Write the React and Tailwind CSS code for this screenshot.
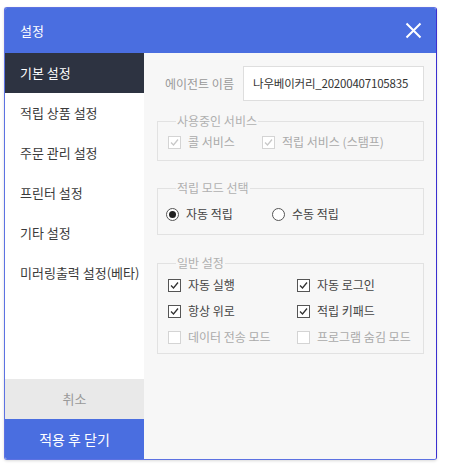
import React from 'react'

const font = { fontFamily: '"Noto Sans CJK KR", "Noto Sans", sans-serif' }

const menu = ['기본 설정', '적립 상품 설정', '주문 관리 설정', '프린터 설정', '기타 설정', '미러링출력 설정(베타)']

const Check = ({ checked, disabled, label }) => (
  <div className="flex items-center h-[16px]">
    <span
      className={
        'w-[13px] h-[13px] border flex items-center justify-center bg-white ' +
        (disabled ? 'border-[#d4d4d4]' : 'border-[#555]')
      }
    >
      {checked && (
        <svg width="11" height="11" viewBox="0 0 11 11">
          <path d="M2 5.5 L4.5 8 L9 2.5" fill="none" stroke={disabled ? '#c8c8c8' : '#333'} strokeWidth="1.3" />
        </svg>
      )}
    </span>
    <span className={'ml-[7px] text-[12px] ' + (disabled ? 'text-[#aaa]' : 'text-[#444]')}>{label}</span>
  </div>
)

const Radio = ({ checked, label }) => (
  <div className="flex items-center h-[16px]">
    <span className="w-[13px] h-[13px] rounded-full border border-[#555] bg-white flex items-center justify-center">
      {checked && <span className="w-[7px] h-[7px] rounded-full bg-[#222]" />}
    </span>
    <span className="ml-[7px] text-[12px] text-[#444]">{label}</span>
  </div>
)

const Group = ({ title, className, children }) => (
  <fieldset className={'border border-[#e2e2e2] px-[10px] ' + className}>
    <legend className="ml-[8px] px-[1px] text-[12px] leading-[14px] text-[#b0b0b0]">{title}</legend>
    {children}
  </fieldset>
)

export default function App() {
  return (
    <div className="w-[450px] h-[470px] bg-white pt-[7px] pl-[4px]" style={font}>
      <div className="w-[433px] h-[453px] flex flex-col rounded-[3px] overflow-hidden border border-[#5d72e2] border-r-[#3a2fd0] shadow-[0_1px_3px_rgba(0,0,0,0.15)]">
        <div className="h-[45px] shrink-0 bg-[#4a6ee0] flex items-center justify-between pl-[15px] pr-[14px]">
          <span className="text-white text-[13px]">설정</span>
          <svg width="17" height="17" viewBox="0 0 17 17">
            <path d="M1.5 1.5 L15.5 15.5 M15.5 1.5 L1.5 15.5" stroke="white" strokeWidth="2" />
          </svg>
        </div>
        <div className="flex flex-1 min-h-0">
          <div className="w-[139px] shrink-0 bg-white flex flex-col">
            {menu.map((m, i) => (
              <div
                key={m}
                className={
                  'h-[40px] flex items-center pl-[15px] text-[13px] ' +
                  (i === 0 ? 'bg-[#2d3341] text-white' : 'text-[#3a3a3a]')
                }
              >
                {m}
              </div>
            ))}
            <div className="flex-1" />
            <div className="h-[40px] bg-[#e9e9e9] text-[#999] text-[13px] flex items-center justify-center">취소</div>
            <div className="h-[40px] bg-[#4a6ee0] text-white text-[14px] flex items-center justify-center">적용 후 닫기</div>
          </div>
          <div className="flex-1 bg-[#f7f7f7] pt-[13px] pl-[13px] pr-[12px]">
            <div className="flex items-center">
              <span className="ml-[8px] w-[78px] text-[12px] text-[#999]">에이전트 이름</span>
              <div className="w-[181px] h-[35px] bg-white border border-[#dedede] flex items-center pl-[9px] text-[11.5px] text-[#333] tracking-[-0.2px]">
                나우베이커리_20200407105835
              </div>
            </div>
            <Group title="사용중인 서비스" className="mt-[13px] pt-[6px] pb-[10px]">
              <div className="flex">
                <div className="w-[94px]">
                  <Check checked disabled label="콜 서비스" />
                </div>
                <Check checked disabled label="적립 서비스 (스탬프)" />
              </div>
            </Group>
            <Group title="적립 모드 선택" className="mt-[20px] pt-[11px] pb-[12px]">
              <div className="flex">
                <div className="w-[106px] -ml-[2px]">
                  <Radio checked label="자동 적립" />
                </div>
                <Radio label="수동 적립" />
              </div>
            </Group>
            <Group title="일반 설정" className="mt-[21px] pt-[7px] pb-[8px]">
              <div className="grid grid-cols-[129px_1fr] gap-y-[10px]">
                <Check checked label="자동 실행" />
                <Check checked label="자동 로그인" />
                <Check checked label="항상 위로" />
                <Check checked label="적립 키패드" />
                <Check disabled label="데이터 전송 모드" />
                <Check disabled label="프로그램 숨김 모드" />
              </div>
            </Group>
          </div>
        </div>
      </div>
    </div>
  )
}
